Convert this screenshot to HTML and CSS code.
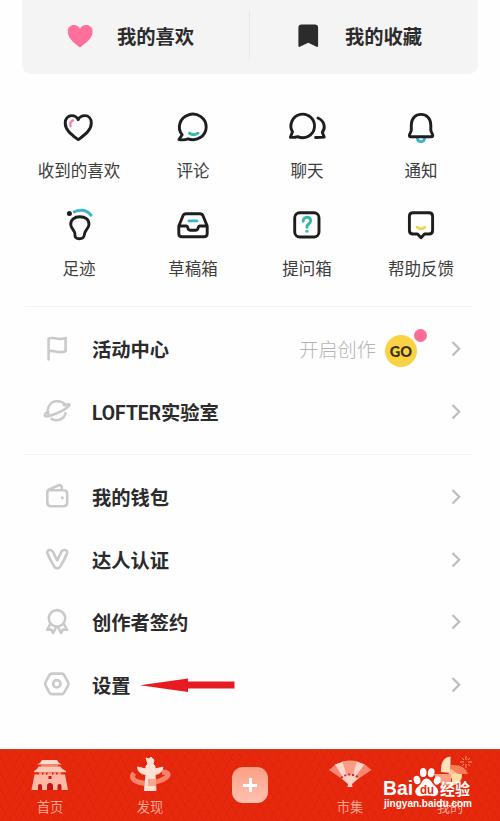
FILE: index.html
```
<!DOCTYPE html>
<html lang="zh-CN">

<head>
    <meta charset="UTF-8">
    <meta name="viewport" content="width=device-width, initial-scale=1.0">
    <title>我的</title>
    <link rel="stylesheet" href="styles.css">
</head>

<body>
    <main class="page">
        <div class="top-card">
            <a class="top-item">
                <svg class="top-icon" viewBox="0 0 28 28"><path d="M14 25.5C9 21.5 1.8 17 1.8 9.5C1.8 5.2 4.6 3 7.8 3C10.7 3 13 4.5 14 6.8C15 4.5 17.3 3 20.2 3C23.4 3 26.6 5.2 26.6 9.5C26.6 17 19 21.5 14 25.5Z" fill="#ff6f9b"/></svg>
                <span>我的喜欢</span>
            </a>
            <a class="top-item">
                <svg class="top-icon" viewBox="0 0 28 28"><path d="M7.5 2.5H20.8Q24.1 2.5 24.1 5.8V23.5Q24.1 25.8 22 24.6L14.2 20.8L6.4 24.6Q4.4 25.8 4.4 23.5V5.8Q4.4 2.5 7.5 2.5Z" fill="#2b2b2b"/></svg>
                <span>我的收藏</span>
            </a>
        </div>

        <div class="grid">
            <a class="grid-item">
                <svg class="grid-icon" viewBox="0 0 36 36"><path d="M17.2 30.7C11 26 4.2 21.5 4.2 14C4.2 9.5 7 6.6 10.8 6.6C13.8 6.6 16 8.2 17.2 10.6C18.4 8.2 20.8 6.6 23.8 6.6C27.6 6.6 30.3 9.5 30.3 14C30.3 21.5 23.4 26 17.2 30.7Z"/><path class="pink" d="M12 11.5Q8.5 12.5 9.6 17.2"/></svg>
                <span>收到的喜欢</span>
            </a>
            <a class="grid-item">
                <svg class="grid-icon" viewBox="0 0 36 36"><path d="M4 30.5L7.2 25.8A13.4 12.8 0 1 1 13 29.9Q9 31.4 4 30.5Z"/><path class="teal" d="M14.5 24.2Q19 27.2 23 24.2"/></svg>
                <span>评论</span>
            </a>
            <a class="grid-item">
                <svg class="grid-icon" viewBox="0 0 36 36"><path d="M1.4 28.2L3.5 22.8A11.8 11.8 0 1 1 8.7 27.6Q5 28.8 1.4 28.2Z"/><path d="M29 9C35.8 12 36.7 19.2 33.3 23.3L35.2 28.1Q31 28.6 26.6 28.5"/></svg>
                <span>聊天</span>
            </a>
            <a class="grid-item">
                <svg class="grid-icon" viewBox="0 0 36 36"><path class="blue" d="M14.3 28.5C14.5 34 21.5 34 21.7 28.5"/><path d="M8.3 16C8.3 9.3 12.5 5.4 18 5.4S27.8 9.3 27.8 16V21.5L29.7 26Q30 27.8 28.3 27.8H7.8Q6.1 27.8 6.4 26L8.3 21.5Z"/></svg>
                <span>通知</span>
            </a>
            <a class="grid-item">
                <svg class="grid-icon" viewBox="0 0 36 36"><circle cx="8.4" cy="6.4" r="2.5" fill="#1e1e1e" stroke="none"/><path class="blue" d="M13.2 4.8Q23.5 .5 30 8.2"/><path d="M18.8 9.7C13.3 9.7 9.6 12.8 9.7 17.5C9.8 22 14.6 23.2 14 28.1C13.7 30.3 15.4 31.8 18.2 31.8C22.5 31.8 23.2 29.7 23.6 26.6C24.1 22.8 28 21.5 28 17.2C28 12.6 24.2 9.7 18.8 9.7Z"/></svg>
                <span>足迹</span>
            </a>
            <a class="grid-item">
                <svg class="grid-icon" viewBox="0 0 36 36"><path d="M3.8 19L8 8.7Q8.8 6.7 11 6.7H25Q27.2 6.7 28 8.7L32.2 19V26.5Q32.2 29.8 29 29.8H7Q3.8 29.8 3.8 26.5V19H11.5C13.5 19 12 23.2 15 23.2H21C24 23.2 22.5 19 24.5 19H32"/><path class="blue" d="M14 13.9H22"/></svg>
                <span>草稿箱</span>
            </a>
            <a class="grid-item">
                <svg class="grid-icon" viewBox="0 0 36 36"><rect x="5.7" y="5.7" width="24.3" height="24.3" rx="5"/><path class="teal" d="M14.2 14.4C14 8.8 22 9 21.7 14C21.5 17 18 16.6 17.9 20.2"/><circle cx="17.9" cy="24.2" r="1.5" fill="#32b8aa" stroke="none"/></svg>
                <span>提问箱</span>
            </a>
            <a class="grid-item">
                <svg class="grid-icon" viewBox="0 0 36 36"><path d="M10 5.7H26Q29.6 5.7 29.6 9.3V23.4Q29.6 27 26 27H21.5L18 30.8L14.5 27H10Q6.4 27 6.4 23.4V9.3Q6.4 5.7 10 5.7Z"/><path class="yellow" d="M14 20.2Q18 23.5 22 20.2"/></svg>
                <span>帮助反馈</span>
            </a>
        </div>

        <div class="list">
            <a class="row">
                <svg class="row-icon" viewBox="0 0 32 32"><path d="M7.6 26.5V5.6C12 3 17 8 24.6 5V18.2C17 21.4 12 15.8 7.6 18.6"/></svg>
                <span class="row-title">活动中心</span>
                <span class="hint">开启创作</span>
                <span class="go">GO</span>
                <svg class="arrow" viewBox="0 0 10 18"><path d="M1.5 2L8.2 8.8L1.5 15.6"/></svg>
            </a>
            <a class="row">
                <svg class="row-icon" viewBox="0 0 32 32"><path d="M7.5 18.8C5 11 10 5.3 16 5.3C20 5.3 22.8 6.8 24.5 9.3M7 15.2C2 19.5 2.8 21.5 9 19.7C15 18 22.5 14.5 26.5 11.3C30.5 8 28.5 7.5 23 9.2M10.7 22.8C15.5 26 23 23.6 24.5 17.2"/></svg>
                <span class="row-title">LOFTER实验室</span>
                <svg class="arrow" viewBox="0 0 10 18"><path d="M1.5 2L8.2 8.8L1.5 15.6"/></svg>
            </a>
        </div>

        <div class="list">
            <a class="row">
                <svg class="row-icon" viewBox="0 0 32 32"><path d="M9 9.3H22.5Q26.2 9.3 26.2 13V21.5Q26.2 25.2 22.5 25.2H10Q6.3 25.2 6.3 21.5V11.5Q6.3 9 9 8.1L17.5 4.3Q20 3.5 20.8 6V9"/><circle cx="21.3" cy="16.8" r="1.5" fill="#cacaca" stroke="none"/></svg>
                <span class="row-title">我的钱包</span>
                <svg class="arrow" viewBox="0 0 10 18"><path d="M1.5 2L8.2 8.8L1.5 15.6"/></svg>
            </a>
            <a class="row">
                <svg class="row-icon" viewBox="0 0 32 32"><path d="M6.4 9.2C5.3 5.8 10.5 4.8 11.8 7.7L16.2 16.4L20.5 7.7C22 4.8 27.2 5.8 26 9.2C24.2 14 21.5 19 19.3 22.5C17.8 25 14.8 25 13.3 22.5C11 19 8.2 14 6.4 9.2Z"/></svg>
                <span class="row-title">达人认证</span>
                <svg class="arrow" viewBox="0 0 10 18"><path d="M1.5 2L8.2 8.8L1.5 15.6"/></svg>
            </a>
            <a class="row">
                <svg class="row-icon" viewBox="0 0 32 32"><circle cx="16" cy="12.3" r="8.2"/><path d="M9 18.5L6.2 23.8L10.2 23.5L12.2 27L15.2 21M17 21L20 27L22 23.5L26 23.8L23.2 18.5"/></svg>
                <span class="row-title">创作者签约</span>
                <svg class="arrow" viewBox="0 0 10 18"><path d="M1.5 2L8.2 8.8L1.5 15.6"/></svg>
            </a>
            <a class="row">
                <svg class="row-icon" viewBox="0 0 32 32"><path d="M10.8 4.6H20.8Q22.2 4.6 23 5.8L27.2 13.4Q27.8 14.8 27.2 16.2L23 23.8Q22.2 25.1 20.8 25.1H10.8Q9.4 25.1 8.6 23.8L4.4 16.2Q3.8 14.8 4.4 13.4L8.6 5.8Q9.4 4.6 10.8 4.6Z"/><circle cx="15.8" cy="14.8" r="3.7"/></svg>
                <span class="row-title">设置</span>
                <svg class="pointer" viewBox="0 0 95 14"><path d="M0 7.2L48 .5V3.5H94.5V10.5H48V14Z" fill="#e61c22"/></svg>
                <svg class="arrow" viewBox="0 0 10 18"><path d="M1.5 2L8.2 8.8L1.5 15.6"/></svg>
            </a>
        </div>
    </main>

    <nav class="tabbar">
        <a class="tab">
            <svg class="tab-icon" viewBox="0 0 44 36">
                <path d="M14 3H29L31 6L34 7.5H9L12 6Z" fill="#ffd9cc"/>
                <path d="M13 7.5H30V9.5H13Z" fill="#f3866d"/>
                <path d="M10.5 9.5H32.5Q34 12.5 38 14V15.3H6V14Q9.5 12.8 10.5 9.5Z" fill="#ffc9b9"/>
                <path d="M11 15.3H33V18H11Z" fill="#f79a83"/>
                <path d="M6.5 17.5H37L40 33H3.5Z" fill="#ffb9a5"/>
                <path d="M10 33V29A2 2 0 0 1 14 29V33ZM19 33V29A3 3 0 0 1 25 29V33ZM29.5 33V29A2 2 0 0 1 33.5 29V33ZM20.5 19H23.5V22H20.5ZM14 15.8H15.5V17.5H14ZM18 15.8H19.5V17.5H18ZM24 15.8H25.5V17.5H24ZM28 15.8H29.5V17.5H28Z" fill="#c91415"/>
            </svg>
            <span>首页</span>
        </a>
        <a class="tab">
            <svg class="tab-icon" viewBox="0 0 44 36">
                <path d="M6 16C-1 25 18 29 31 24C42 20 43 15 34 15" fill="none" stroke="#f6836a" stroke-width="5"/>
                <path d="M18 1L21 2L23 0L26 3L25 7L27 9V12L35 10Q34 17 27 17.5L28 33.5H16.5L18 17.5Q10 17 9.5 10L18 12V9L20 7Z" fill="#ffe0d5" stroke="#ffe0d5" stroke-linejoin="round"/>
                <path d="M20 22H28V29H20Z" fill="#f9a68e"/>
            </svg>
            <span>发现</span>
        </a>
        <a class="tab publish">
            <span class="plus"></span>
        </a>
        <a class="tab">
            <svg class="tab-icon" viewBox="0 0 44 36">
                <path d="M1 13L8 7L18 22L14 22Z" fill="#f88870"/>
                <path d="M7 7.5L15 4.5L20 21L16 22Z" fill="#ffd6ca"/>
                <path d="M14.5 4.5Q22 2.6 29.5 4.5L24.5 21H19.5Z" fill="#f99c86"/>
                <path d="M29 4.5L37 7.5L28 22L24 21Z" fill="#ffd6ca"/>
                <path d="M36.5 7L43.5 13L30 22L26 22Z" fill="#f88870"/>
                <path d="M13.5 21.5Q22 14.5 30.5 21.5L24 27L24.5 30H19.5L20 27Z" fill="#ffd3c4"/>
                <path d="M13 21Q22 14 31 21" fill="none" stroke="#cc2920" stroke-width="2" stroke-dasharray="2 2"/>
            </svg>
            <span>市集</span>
        </a>
        <a class="tab">
            <svg class="tab-icon" viewBox="0 0 44 36">
                <path d="M13 15Q12 1 22.5 -.5V16Z" fill="#ffe1bc"/>
                <path d="M23 8Q37 7 40 17H23Z" fill="#f97e57"/>
                <path d="M23 12L30 17L26 24L20 18Z" fill="#ffc79b"/>
                <path d="M24 17H34Q35 26 24 29Z" fill="#ffdda9"/>
                <path d="M6 17H23V29Q10 29 6 17Z" fill="#f9a084"/>
                <path d="M38 -1V3M38 7V11M32 5H36M40 5H44M34 1L36 3M40 7L42 9M42 1L40 3M36 7L34 9" stroke="#ff9b66" stroke-width="1" fill="none"/>
            </svg>
            <span>我的</span>
        </a>
    </nav>

    <!-- site mark, sits on top of the tab bar -->
    <svg class="watermark" viewBox="0 0 96 50">
        <text x="0" y="31" class="wm-name" textLength="30" lengthAdjust="spacingAndGlyphs">Bai</text>
        <g fill="#fff">
            <ellipse cx="34" cy="16" rx="3.3" ry="4.3" transform="rotate(-18 34 16)"/>
            <ellipse cx="40.2" cy="8.5" rx="3.3" ry="4.5"/>
            <ellipse cx="48.2" cy="8.8" rx="3.3" ry="4.5" transform="rotate(10 48.2 8.8)"/>
            <ellipse cx="54.2" cy="16.5" rx="3.3" ry="4.2" transform="rotate(20 54.2 16.5)"/>
            <path d="M43.5 14.5C47.5 14.5 48.5 18.5 51 21C54 24 56 26 55 29C53.5 34 48 31.5 44 31.5S34.5 34 32.5 29C31.5 26 34 23.5 36.8 21C39 19 39.5 14.5 43.5 14.5Z"/>
        </g>
        <text x="37" y="29.5" class="wm-du" textLength="14" lengthAdjust="spacingAndGlyphs">du</text>
        <text x="57" y="30.5" class="wm-cn" textLength="30" lengthAdjust="spacingAndGlyphs">经验</text>
        <text x="1" y="43" class="wm-url" textLength="88" lengthAdjust="spacingAndGlyphs">jingyan.baidu.com</text>
    </svg>
</body>

</html>
```
FILE: styles.css
```
* {
    box-sizing: border-box;
}

body {
    margin: 0;
    height: 821px;
    display: flex;
    flex-direction: column;
    position: relative;
    overflow: hidden;
    background: #fefefe;
    color: #2b2b2b;
    font-family: Roboto, "Noto Sans CJK SC", sans-serif;
}

svg {
    display: block;
    flex: none;
    overflow: visible;
}

.page {
    flex: 1;
    padding: 0 22px;
}

/* likes / favourites */
.top-card {
    display: flex;
    height: 74px;
    background: #f4f4f4;
    border-radius: 0 0 9px 9px;
}

.top-item {
    flex: 1;
    display: flex;
    align-items: center;
    gap: 23px;
    padding-left: 44px;
    padding-bottom: 3px;
    font-size: 19.3px;
    font-weight: 700;
    position: relative;
}

.top-item + .top-item::before {
    content: "";
    position: absolute;
    left: -1px;
    top: 10px;
    width: 1px;
    height: 50px;
    background: #e9e9e9;
}

.top-icon {
    width: 28px;
    height: 28px;
}

/* shortcuts */
.grid {
    display: grid;
    grid-template-columns: repeat(4, 1fr);
    grid-auto-rows: 98px;
    padding-top: 35px;
    height: 232px;
}

.grid-item {
    display: flex;
    flex-direction: column;
    align-items: center;
    gap: 14.5px;
    font-size: 16.5px;
    line-height: 24px;
    color: #3c3c3c;
}

.grid-icon {
    width: 36px;
    height: 36px;
    fill: none;
    stroke: #1e1e1e;
    stroke-width: 2.9;
    stroke-linecap: round;
    stroke-linejoin: round;
}

.grid-icon .pink {
    stroke: #f58aa6;
    stroke-width: 2.4;
}

.grid-icon .teal {
    stroke: #32b8aa;
}

.grid-icon .blue {
    stroke: #3db4cd;
}

.grid-icon .yellow {
    stroke: #e8d850;
}

/* menu */
.list {
    margin: 0 6px 0 3px;
    padding: 11px 11px 11px 16px;
    border-top: 1px solid #f2f2f2;
}

.row {
    display: flex;
    align-items: center;
    height: 62.5px;
}

.row-icon {
    width: 32px;
    height: 32px;
    margin-right: 19px;
    fill: none;
    stroke: #cacaca;
    stroke-width: 2.6;
    stroke-linecap: round;
    stroke-linejoin: round;
}

.row-title {
    font-size: 19.3px;
    font-weight: 700;
}

.hint {
    margin-left: auto;
    margin-right: 9px;
    font-size: 19.2px;
    font-weight: 300;
    color: #b4b4b4;
}

.go {
    position: relative;
    width: 32px;
    height: 32px;
    margin-top: 3px;
    margin-right: 34px;
    border-radius: 50%;
    background: #fad345;
    color: #3a3010;
    font: 900 14.5px/33px Lato, sans-serif;
    text-align: center;
}

.go::after {
    content: "";
    position: absolute;
    right: -10px;
    top: -6px;
    width: 13px;
    height: 13px;
    border-radius: 50%;
    background: #fc6c96;
}

.arrow {
    width: 10px;
    height: 18px;
    margin-left: auto;
    fill: none;
    stroke: #bdbdbd;
    stroke-width: 2.2;
}

.go + .arrow {
    margin-left: 0;
}

.pointer {
    width: 95px;
    height: 14px;
    margin-left: 9.5px;
}

/* bottom tabs */
.tabbar {
    display: flex;
    height: 72px;
    border-top: 1px solid #d0401f;
    background-color: #e6280c;
    background-image:
        repeating-linear-gradient(60deg, rgba(170, 0, 0, 0.09) 0 1px, transparent 1px 8px),
        repeating-linear-gradient(-60deg, rgba(170, 0, 0, 0.09) 0 1px, transparent 1px 8px);
}

.tab {
    flex: 1;
    display: flex;
    flex-direction: column;
    align-items: center;
    padding-top: 7px;
    gap: 5px;
    font-size: 13.3px;
    line-height: 20px;
    color: #f9a48f;
}

.tab-icon {
    width: 44px;
    height: 36px;
}

.publish {
    padding-top: 17px;
}

.plus {
    width: 36px;
    height: 36px;
    border-radius: 11px;
    background:
        linear-gradient(#fff, #fff) center / 14px 3px no-repeat,
        linear-gradient(#fff, #fff) center / 3px 14px no-repeat,
        linear-gradient(#fb9e85, #ffc3b0);
}

.watermark {
    position: absolute;
    left: 383px;
    top: 764px;
    width: 96px;
    height: 50px;
    fill: #fff;
}

.wm-name {
    font: 700 20px "Liberation Sans", sans-serif;
}

.wm-du {
    font: 700 13px "Liberation Sans", sans-serif;
    fill: #e6280c;
}

.wm-cn {
    font: 700 15.5px "Noto Sans CJK SC", sans-serif;
}

.wm-url {
    font: 700 11px "Liberation Sans", sans-serif;
}
```
